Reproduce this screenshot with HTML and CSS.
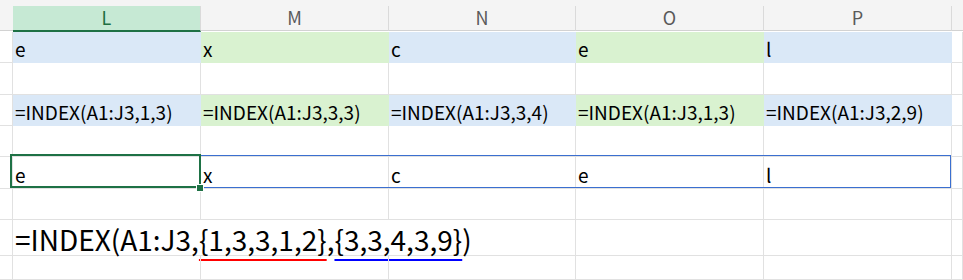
FILE: index.html
```html
<!DOCTYPE html>
<html>
<head>
<meta charset="utf-8">
<link rel="stylesheet" href="styles.css">
</head>
<body>
<div class="sheet">
  <div class="strip"></div>
  <div class="hd corner"></div>
  <div class="hd active">L</div>
  <div class="hd">M</div>
  <div class="hd">N</div>
  <div class="hd">O</div>
  <div class="hd">P</div>
  <div class="hd rest"></div>

  <div class="c rh"></div>
  <div class="c blue">e</div>
  <div class="c green">x</div>
  <div class="c blue">c</div>
  <div class="c green">e</div>
  <div class="c blue">l</div>
  <div class="c"></div>

  <div class="c rh"></div>
  <div class="c"></div><div class="c"></div><div class="c"></div><div class="c"></div><div class="c"></div><div class="c"></div>

  <div class="c rh"></div>
  <div class="c blue">=INDEX(A1:J3,1,3)</div>
  <div class="c green">=INDEX(A1:J3,3,3)</div>
  <div class="c blue">=INDEX(A1:J3,3,4)</div>
  <div class="c green">=INDEX(A1:J3,1,3)</div>
  <div class="c blue">=INDEX(A1:J3,2,9)</div>
  <div class="c"></div>

  <div class="c rh"></div>
  <div class="c"></div><div class="c"></div><div class="c"></div><div class="c"></div><div class="c"></div><div class="c"></div>

  <div class="c rh"></div>
  <div class="c">e</div>
  <div class="c">x</div>
  <div class="c">c</div>
  <div class="c">e</div>
  <div class="c">l</div>
  <div class="c"></div>

  <div class="c rh"></div>
  <div class="c"></div><div class="c"></div><div class="c"></div><div class="c"></div><div class="c"></div><div class="c"></div>

  <div class="c rh"></div>
  <div class="c big">=INDEX(A1:J3,<span class="ul ul-red">{1,3,3,1,2}</span>,<span class="ul ul-blue">{3,3,4,3,9}</span>)</div>
  <div class="c"></div><div class="c"></div><div class="c"></div>

  <div class="c rh"></div>
  <div class="c"></div><div class="c"></div><div class="c"></div><div class="c"></div><div class="c"></div><div class="c"></div>

  <div class="range-box"></div>
  <div class="sel-box"></div>
  <div class="handle"></div>
</div>
</body>
</html>
```

FILE: styles.css
```css
* { box-sizing: border-box; }
html, body {
  margin: 0;
  padding: 0;
  background: #fff;
}
.sheet {
  position: relative;
  width: 963px;
  height: 280px;
  overflow: hidden;
  display: grid;
  grid-template-columns: 13px 188px 188px 187px 188px 188px 1fr;
  grid-template-rows: 6px 26px 31px 32px 31px 31px 32px 31px 36px 1fr;
  font-family: "Noto Sans CJK SC", "Noto Sans", sans-serif;
  color: #000;
}
.strip {
  grid-column: 1 / -1;
  background: #f4f4f4;
}
.hd {
  background: #f4f4f4;
  border-right: 1px solid #dadada;
  border-bottom: 1px solid #d2d2d2;
  margin-bottom: 1px;
  color: #5a5a5a;
  font-size: 18px;
  line-height: 18px;
  display: flex;
  align-items: flex-end;
  justify-content: center;
  padding-bottom: 4px;
}
.hd.corner { border-right: none; }
.hd.rest { border-right: none; }
.hd.active {
  background: #c6e9d4;
  color: #1e6f42;
  border-bottom: 2px solid #1e7145;
  margin-bottom: 0;
}
.c {
  border-right: 1px solid #e1e1e1;
  border-bottom: 1px solid #e1e1e1;
  font-size: 19px;
  line-height: 19px;
  display: flex;
  align-items: flex-end;
  padding: 0 0 4px 2px;
  white-space: nowrap;
}
.c.rh { padding: 0; }
.c.blue {
  background: #dae8f7;
  border-color: #dae8f7;
}
.c.green {
  background: #d9f2d0;
  border-color: #d9f2d0;
}
.c.big {
  grid-column: span 3;
  font-size: 28px;
  line-height: 28px;
  padding-bottom: 2px;
  overflow: visible;
}
.ul {
  text-decoration-line: underline;
  text-decoration-thickness: 2px;
  text-underline-offset: 7.5px;
  text-decoration-skip-ink: none;
}
.ul-red { text-decoration-color: #ff0000; }
.ul-blue { text-decoration-color: #0000ff; }
.range-box {
  position: absolute;
  left: 199px;
  top: 155px;
  width: 752px;
  height: 33px;
  border: 1px solid #3b6fd0;
}
.sel-box {
  position: absolute;
  left: 10px;
  top: 154px;
  width: 191px;
  height: 34px;
  border: 2px solid #1e7145;
}
.handle {
  position: absolute;
  left: 196px;
  top: 184px;
  width: 8px;
  height: 8px;
  background: #1e7145;
  border: 1px solid #fff;
}
```
